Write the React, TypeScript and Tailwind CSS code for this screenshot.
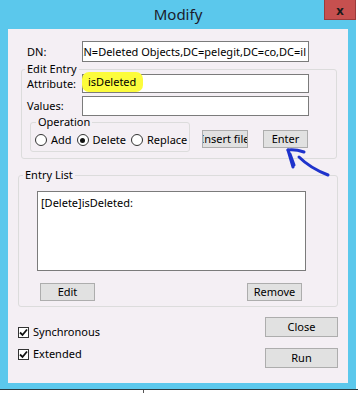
import React from 'react';

const font = { fontFamily: '"Noto Sans", "Open Sans", sans-serif' };

function Radio({ label, checked }: { label: string; checked?: boolean }) {
  return (
    <div className="flex items-center">
      <span className="w-[12px] h-[12px] rounded-full border border-[#333] bg-white flex items-center justify-center">
        {checked && <span className="w-[5px] h-[5px] rounded-full bg-[#111]" />}
      </span>
      <span className="ml-[4px]">{label}</span>
    </div>
  );
}

function Check({ label }: { label: string }) {
  return (
    <div className="flex items-center">
      <span className="w-[11px] h-[11px] border border-[#333] bg-white flex items-center justify-center">
        <svg width="9" height="9" viewBox="0 0 9 9">
          <path d="M1 4.5 L3.5 7 L8 1.5" fill="none" stroke="#111" strokeWidth="1.8" />
        </svg>
      </span>
      <span className="ml-[4px]">{label}</span>
    </div>
  );
}

function Btn({ label, className = '' }: { label: string; className?: string }) {
  return (
    <div
      className={
        'flex items-center justify-center overflow-hidden whitespace-nowrap bg-[#e1e1e1] border border-[#adadad] ' +
        className
      }
    >
      {label}
    </div>
  );
}

export default function App() {
  return (
    <div className="w-[358px] h-[393px] bg-white text-[11px] leading-[14px] text-black" style={font}>
      <div className="w-[356px] h-[389px] bg-[#5bc8ec] flex flex-col px-[8px] pb-[6px]">
        {/* title bar */}
        <div className="h-[29px] flex items-start relative">
          <div className="flex-1 text-center text-[15px] leading-[20px] pt-[4px] text-[#1b1b2b]">Modify</div>
          <div className="absolute right-[-8px] top-0 w-[32px] h-[20px] bg-[#c6504f] border border-[#9c3a3a] border-t-0 flex items-center justify-center text-[13px] font-bold text-[#1a1a1a]">
            x
          </div>
        </div>

        {/* client area */}
        <div className="flex-1 bg-[#f4eff4] flex flex-col relative">
          {/* DN */}
          <div className="flex items-center mt-[12px]">
            <span className="w-[74px] pl-[19px]">DN:</span>
            <div className="w-[227px] h-[21px] bg-white border border-[#7b7b7b] flex items-center justify-end overflow-hidden whitespace-nowrap pr-[2px]">
              CN=Deleted Objects,DC=pelegit,DC=co,DC=il
            </div>
          </div>

          {/* Edit Entry */}
          <fieldset className="ml-[13px] w-[316px] border border-[#dcdcdc] rounded-[3px] pb-[6px]">
            <legend className="ml-[3px] px-[2px] leading-[14px]">Edit Entry</legend>
            <div className="flex items-center mt-[-2px] ml-[5px]">
              <span className="w-[55px]">Attribute:</span>
              <div className="w-[227px] h-[19px] bg-white border border-[#7b7b7b] flex items-center">
                <span className="bg-[#fcfc3c] rounded-[7px] h-[20px] mt-[-3px] ml-[-1px] w-[61px] pl-[6px] flex items-center">
                  isDeleted
                </span>
              </div>
            </div>
            <div className="flex items-center mt-[3px] ml-[5px]">
              <span className="w-[55px]">Values:</span>
              <div className="w-[227px] h-[20px] bg-white border border-[#7b7b7b]" />
            </div>
            <div className="flex items-start mt-[-1px] ml-[5px]">
              <fieldset className="ml-[3px] w-[160px] h-[37px] border border-[#dcdcdc] rounded-[3px]">
                <legend className="ml-[5px] px-[2px] leading-[14px]">Operation</legend>
                <div className="flex items-center mt-[4px] ml-[4px] gap-[5px]">
                  <Radio label="Add" />
                  <Radio label="Delete" checked />
                  <Radio label="Replace" />
                </div>
              </fieldset>
              <Btn label="Insert file" className="ml-[12px] mt-[15px] w-[46px] h-[18px] border-[#8a8a8a]" />
              <Btn label="Enter" className="ml-[15px] mt-[15px] w-[45px] h-[18px] border-[#6a6a6a]" />
            </div>
          </fieldset>

          {/* Entry List */}
          <fieldset className="ml-[10px] mt-[9px] w-[320px] border border-[#dcdcdc] rounded-[3px] pb-[5px]">
            <legend className="ml-[4px] px-[2px] leading-[14px]">Entry List</legend>
            <div className="ml-[18px] mt-[9px] w-[269px] h-[80px] bg-white border border-[#7b7b7b] pl-[3px] pt-[4px]">
              [Delete]isDeleted:
            </div>
            <div className="flex mt-[12px] ml-[18px]">
              <Btn label="Edit" className="ml-[3px] w-[55px] h-[18px]" />
              <Btn label="Remove" className="ml-[152px] w-[55px] h-[18px]" />
            </div>
          </fieldset>

          {/* bottom */}
          <div className="flex mt-[10px]">
            <div className="flex flex-col ml-[10px] pt-[8px] gap-[8px]">
              <Check label="Synchronous" />
              <Check label="Extended" />
            </div>
            <div className="ml-auto mr-[10px] flex flex-col gap-[11px]">
              <Btn label="Close" className="w-[73px] h-[20px]" />
              <Btn label="Run" className="w-[73px] h-[20px]" />
            </div>
          </div>

          {/* pen scribble */}
          <svg className="absolute left-[272px] top-[114px]" width="56" height="40" viewBox="0 0 56 40">
            <g fill="none" stroke="#1f33cc" strokeWidth="3" strokeLinecap="round">
              <path d="M8 7 Q15 6 24 9" />
              <path d="M8 7 L13 24" />
              <path d="M10 11 L14 22" />
              <path d="M19 14 Q30 25 48 32" />
            </g>
          </svg>
        </div>
      </div>
      <div className="w-full h-[1px] bg-[#2a3a40]" />
      <div className="ml-[143px] w-[1px] h-[3px] bg-[#555]" />
    </div>
  );
}
